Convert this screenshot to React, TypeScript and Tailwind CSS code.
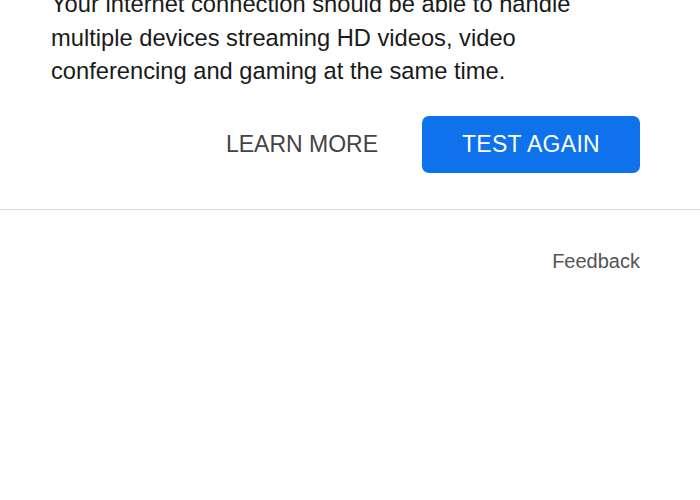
export default function App() {
  return (
    <main className="w-[700px] h-[500px] overflow-hidden bg-white" style={{ fontFamily: '"Liberation Sans", Arial, sans-serif' }}>
      {/* Result text */}
      <section className="pl-[51px] pr-[60px]">
        <p className="mt-[-12px] text-[23.7px] leading-[33.5px] text-[#1a1a1a]">
          Your internet connection should be able to handle
          <br />
          multiple devices streaming HD videos, video
          <br />
          conferencing and gaming at the same time.
        </p>

        {/* Actions */}
        <div className="mt-[27px] flex items-center justify-end">
          <button className="mr-[44px] text-[23px] text-[#444]">LEARN MORE</button>
          <button className="w-[218px] h-[57px] rounded-[7px] bg-[#0e72ed] text-white text-[23px] tracking-[0.3px]">TEST AGAIN</button>
        </div>
      </section>

      <div className="mt-[36px] h-px bg-[#dcdcdc]"></div>

      <div className="pr-[60px] mt-[39px] flex justify-end">
        <a className="text-[20px] leading-[24px] text-[#555]">Feedback</a>
      </div>
    </main>
  )
}
